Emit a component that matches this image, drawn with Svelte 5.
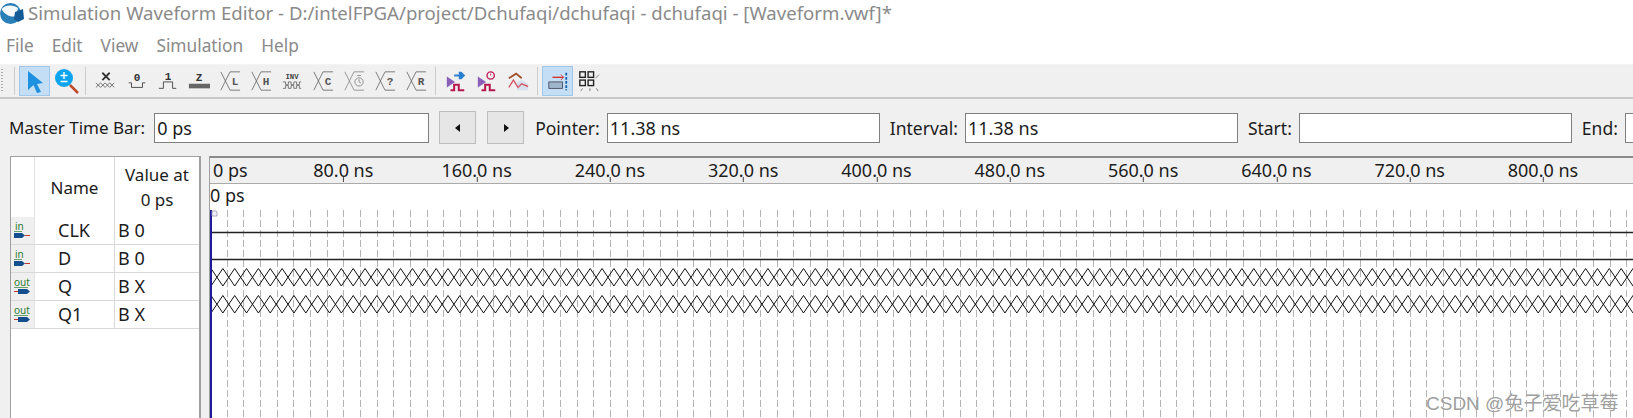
<script lang="ts">
    const menus = ['File', 'Edit', 'View', 'Simulation', 'Help'];
    const ticks = ['80.0 ns', '160.0 ns', '240.0 ns', '320.0 ns', '400.0 ns', '480.0 ns', '560.0 ns', '640.0 ns', '720.0 ns', '800.0 ns'];
    const signals = [
        { name: 'CLK', value: 'B 0', dir: 'in' },
        { name: 'D', value: 'B 0', dir: 'in' },
        { name: 'Q', value: 'B X', dir: 'out' },
        { name: 'Q1', value: 'B X', dir: 'out' }
    ];
    const gridStep = 133.3 / 8;
    const gridLines = Array.from({ length: 86 }, (_, i) => (i + 1) * gridStep);

    // unknown value band: a row of crossed diagonals
    function crossBand(y: number, h: number) {
        let d = '';
        for (let x = 1; x < 1430; x += 11.85) {
            d += `M${x} ${y}L${x + 11.85} ${y + h}M${x + 11.85} ${y}L${x} ${y + h}`;
        }
        return d;
    }
</script>

<div class="window">
    <div class="titlebar">
        <svg class="logo" viewBox="0 0 24 24" aria-hidden="true">
            <circle cx="10.500" cy="12.500" r="10.500" fill="#2a7fb8" />
            <path d="M1.500 8 C6 3 14 4 18 7 L16 15 C11 17 5 14 1.500 8 Z" fill="#f6f9fc" />
            <path d="M15 11 L23 8 L24 18 L18 21 L14 18 Z" fill="#135a96" />
        </svg>
        <span>Simulation Waveform Editor - D:/intelFPGA/project/Dchufaqi/dchufaqi - dchufaqi - [Waveform.vwf]*</span>
    </div>

    <nav class="menubar">
        {#each menus as m}
            <span>{m}</span>
        {/each}
    </nav>

    <div class="toolbar">
        <div class="grip"></div>
        <div class="sep"></div>
        <button class="tool on" aria-label="Select">
            <svg viewBox="0 0 24 24" width="24" height="24"><path d="M5 2 L20 14 L14 15 L18 23 L14 24 L10.500 16 L5 21 Z" fill="#1e90e0" /></svg>
        </button>
        <button class="tool" aria-label="Zoom">
            <svg viewBox="0 0 26 28" width="26" height="28">
                <path d="M17 18 L25 26" stroke="#c0492b" stroke-width="2.500" />
                <circle cx="11" cy="11" r="9" fill="#0ca4ec" />
                <path d="M7.500 8.500h7M11 5v7M7.500 14.500h7" stroke="#fff" stroke-width="1.400" />
            </svg>
        </button>
        <div class="sep"></div>

        <button class="tool" aria-label="Unknown">
            <svg viewBox="0 0 24 24" width="22" height="22" fill="none" stroke="#333">
                <path d="M8 3l8 8M16 3l-8 8" stroke-width="2" />
                <path d="M1 14l5 5 5-5 5 5 5-5M1 19l5-5 5 5 5-5 5 5" stroke-width=".7" />
            </svg>
        </button>
        <button class="tool" aria-label="Low">
            <svg viewBox="0 0 24 24" width="22" height="22" fill="none" stroke="#444">
                <path d="M3 14h3v5h12v-5h3" />
                <text x="12" y="12" class="glyph" text-anchor="middle">0</text>
            </svg>
        </button>
        <button class="tool" aria-label="High">
            <svg viewBox="0 0 24 24" width="22" height="22" fill="none" stroke="#444">
                <path d="M2 20h5v-7h10v7h4" />
                <text x="12" y="11" class="glyph" text-anchor="middle">1</text>
            </svg>
        </button>
        <button class="tool" aria-label="High impedance">
            <svg viewBox="0 0 24 24" width="22" height="22">
                <rect x="1" y="15" width="23" height="5" fill="#666" />
                <text x="12" y="12" class="glyph" text-anchor="middle">Z</text>
            </svg>
        </button>
        {#each ['L', 'H'] as l}
            <button class="tool" aria-label={l}>
                <svg viewBox="0 0 24 24" width="22" height="22" fill="none" stroke="#666">
                    <path d="M2 2l5 10-5 10M12 2l-5 10 5 10M12 2h11M12 22h11" stroke-width=".9" />
                    <text x="17.500" y="16" class="mono" text-anchor="middle">{l}</text>
                </svg>
            </button>
        {/each}
        <button class="tool" aria-label="Invert">
            <svg viewBox="0 0 24 24" width="22" height="22" fill="none" stroke="#555">
                <text x="12" y="10" class="tiny" text-anchor="middle">INV</text>
                <path d="M2 13h3v3h3v-3h3v3h3v-3h3v3h3v-3h2M2 20h3v-3h3v3h3v-3h3v3h3v-3h3v3h2" stroke-width=".8" />
            </svg>
        </button>
        <button class="tool" aria-label="Count">
            <svg viewBox="0 0 24 24" width="22" height="22" fill="none" stroke="#666">
                <path d="M2 2l5 10-5 10M12 2l-5 10 5 10M12 2h11M12 22h11" stroke-width=".9" />
                <text x="17.500" y="16" class="mono" text-anchor="middle">C</text>
            </svg>
        </button>
        <button class="tool" aria-label="Clock">
            <svg viewBox="0 0 24 24" width="22" height="22" fill="none" stroke="#888">
                <path d="M2 2l5 10-5 10M12 2l-5 10 5 10M12 2h11M12 22h11" stroke-width=".9" />
                <circle cx="17.500" cy="13" r="4.500" />
                <path d="M17.500 10v3l2 1M15.500 6h4" />
            </svg>
        </button>
        <button class="tool" aria-label="Arbitrary">
            <svg viewBox="0 0 24 24" width="22" height="22" fill="none" stroke="#666">
                <path d="M2 2l5 10-5 10M12 2l-5 10 5 10M12 2h11M12 22h11" stroke-width=".9" />
                <text x="17.500" y="16" class="mono" text-anchor="middle">?</text>
            </svg>
        </button>
        <button class="tool" aria-label="Random">
            <svg viewBox="0 0 24 24" width="22" height="22" fill="none" stroke="#666">
                <path d="M2 2l5 10-5 10M12 2l-5 10 5 10M12 2h11M12 22h11" stroke-width=".9" />
                <text x="17.500" y="16" class="mono" text-anchor="middle">R</text>
            </svg>
        </button>
        <div class="sep"></div>

        <button class="tool" aria-label="Functional simulation">
            <svg viewBox="0 0 24 24" width="22" height="22" fill="none">
                <path d="M2 7l9 6-9 6z" fill="#8a5fb8" />
                <path d="M10 5h5v-3l3 0 4 4-4 4h-3v-3h-5z" fill="#2b7fd0" />
                <path d="M6 22h4v-6h5v6h6" stroke="#b5174f" stroke-width="2.200" />
            </svg>
        </button>
        <button class="tool" aria-label="Timing simulation">
            <svg viewBox="0 0 24 24" width="22" height="22" fill="none">
                <path d="M2 7l9 6-9 6z" fill="#8a5fb8" />
                <circle cx="16" cy="6" r="4" stroke="#c2185b" stroke-width="1.500" />
                <path d="M16 4v2" stroke="#c2185b" />
                <path d="M6 22h4v-6h5v6h6" stroke="#b5174f" stroke-width="2.200" />
            </svg>
        </button>
        <button class="tool" aria-label="Netlist">
            <svg viewBox="0 0 24 24" width="22" height="22" fill="none">
                <path d="M11 13l5-2 7 4v7H11z" fill="#d5e2ee" />
                <path d="M2 9l8-5 6 5" stroke="#a0522d" stroke-width="2" />
                <path d="M2 19l5-8 5 8 4-4 7 3" stroke="#d65a6a" stroke-width="1.500" />
            </svg>
        </button>
        <div class="sep"></div>

        <button class="tool on" aria-label="Snap">
            <svg viewBox="0 0 24 24" width="22" height="22" fill="none">
                <path d="M6 8h12" stroke="#d0342c" stroke-width="1.500" />
                <path d="M15 5l3 3-3 3" stroke="#d0342c" />
                <rect x="2" y="13" width="15" height="7" fill="#9fb6cc" stroke="#334" stroke-width=".8" />
                <path d="M21 3v19" stroke="#1c5fae" stroke-width="2" stroke-dasharray="3 1.500" />
            </svg>
        </button>
        <button class="tool" aria-label="Grid">
            <svg viewBox="0 0 24 24" width="22" height="22" fill="none" stroke="#222" stroke-width="1.500">
                <rect x="2" y="2" width="6" height="6" />
                <rect x="11" y="2" width="6" height="6" />
                <rect x="2" y="11" width="6" height="6" />
                <rect x="11" y="11" width="6" height="6" />
                <path d="M19 9l4-4M3 23l2-3M13 23v-3M22 23l-2-3" stroke-width="1" stroke="#777" />
            </svg>
        </button>
    </div>

    <div class="timebar">
        <label class="m">Master Time Bar:<span class="field f1">0 ps</span></label>
        <button class="step" aria-label="Previous"><i class="tri left"></i></button>
        <button class="step" aria-label="Next"><i class="tri right"></i></button>
        <label class="p">Pointer:<span class="field f2">11.38 ns</span></label>
        <label class="p">Interval:<span class="field f2">11.38 ns</span></label>
        <label class="p">Start:<span class="field f2"></span></label>
        <label class="p">End:<span class="field f3"></span></label>
    </div>

    <div class="editor">
        <div class="table">
            <div class="row head">
                <div class="c0"></div>
                <div class="c1">Name</div>
                <div class="c2">Value at<br />0 ps</div>
            </div>
            {#each signals as s}
                <div class="row sig">
                    <div class="c0 dir">
                        <svg viewBox="0 0 20 20" width="20" height="20" overflow="visible" aria-hidden="true">
                            <text x={s.dir === 'in' ? 2 : 1} y="8" class="dirtext">{s.dir}</text>
                            {#if s.dir === 'in'}
                                <path d="M1 9.500h8" stroke="#2e7d32" stroke-width=".7" />
                                <path d="M1 11h8l3 2.500-3 2.500H1z" fill="#134f8f" />
                                <path d="M12 13.500h5" stroke="#c0392b" />
                            {:else}
                                <path d="M1 9.500h14" stroke="#2e7d32" stroke-width=".7" />
                                <path d="M5 11h9l3 2.500-3 2.500H5z" fill="#134f8f" />
                                <path d="M1 13.500h4" stroke="#c0392b" />
                            {/if}
                        </svg>
                    </div>
                    <div class="c1 nm">{s.name}</div>
                    <div class="c2 val">{s.value}</div>
                </div>
            {/each}
        </div>

        <div class="wave">
            <div class="ruler">
                <span class="zero">0 ps</span>
                {#each ticks as t, i}
                    <span class="tick" style="left: {(i + 1) * 133.3}px">{t}</span>
                {/each}
            </div>
            <div class="cursor">0 ps</div>
            <div class="plot">
                <svg class="canvas" width="1424" height="208" aria-hidden="true">
                    {#each gridLines as g}
                        <path d="M{Math.round(g) + .5} 0V208" stroke="#b4b4b4" stroke-dasharray="7 3" />
                    {/each}
                    <path d="M1 22.500H1424M1 49.500H1424" stroke="#222" stroke-width="1.500" />
                    <path d={crossBand(58.500, 17.500)} class="band" />
                    <path d={crossBand(85.500, 17.500)} class="band" />
                    <path d="M1 0V208" stroke="#1c1c9c" stroke-width="2" />
                    <path d="M2 1h4l1 1v4h-5z" fill="#eef" stroke="#99a" stroke-width=".8" />
                </svg>
            </div>
        </div>
    </div>

    <div class="mark">CSDN @兔子爱吃草莓</div>
</div>

<style>
    :global(body) {
        margin: 0;
        background: #f0f0f0;
    }

    .window {
        position: relative;
        width: 1633px;
        height: 418px;
        overflow: hidden;
        display: flex;
        flex-direction: column;
        font-family: "Noto Sans", "Open Sans", sans-serif;
        color: #1c1c1c;
        font-size: 17.5px;
    }

    .titlebar {
        height: 30px;
        box-sizing: border-box;
        padding-bottom: 5px;
        flex: none;
        background: #fff;
        display: flex;
        align-items: center;
        gap: 4px;
        font-size: 18.6px;
        color: #8a8a8a;
        white-space: nowrap;
    }

    .logo { width: 24px; height: 24px; flex: none; }

    .menubar {
        height: 34px;
        box-sizing: border-box;
        padding: 0 0 4px 6px;
        flex: none;
        background: #fff;
        display: flex;
        align-items: center;
        gap: 18px;
        font-size: 17.3px;
        color: #8a8a8a;
    }

    .toolbar {
        height: 35px;
        box-sizing: border-box;
        flex: none;
        border-top: 1px solid #f4f4f4;
        border-bottom: 2px solid #c8c8c8;
        background: #f0f0f0;
        display: flex;
        align-items: center;
        padding-left: 1px;
    }

    .grip {
        width: 2px;
        height: 24px;
        margin-right: 7px;
        background: repeating-linear-gradient(#b0b0b0 0 1px, transparent 1px 3px);
    }

    .sep {
        width: 1px;
        height: 28px;
        background: #ccc;
        margin: 0 4px;
        flex: none;
    }

    .tool {
        width: 31px;
        height: 30px;
        flex: none;
        padding: 0;
        border: 1px solid transparent;
        background: none;
        display: flex;
        align-items: center;
        justify-content: center;
    }

    .tool.on {
        background: #c4dff5;
        border-color: #9fc8ea;
    }

    .glyph { font: bold 12px "Liberation Mono", monospace; fill: #333; stroke: none; }
    .mono { font: bold 12px "Liberation Mono", monospace; fill: #555; stroke: none; }
    .tiny { font: bold 8px "Liberation Mono", monospace; fill: #444; stroke: none; }

    .timebar {
        height: 57px;
        box-sizing: border-box;
        flex: none;
        display: flex;
        align-items: center;
        padding-left: 9px;
        white-space: nowrap;
    }

    label {
        display: flex;
        align-items: center;
        gap: 7px;
    }

    .field {
        height: 30px;
        box-sizing: border-box;
        border: 1px solid #7f7f7f;
        background: #fff;
        display: flex;
        align-items: center;
        padding-left: 2px;
        font-size: 18px;
    }

    .m { margin-right: 10px; font-size: 17px; gap: 9px; }
    .f1 { width: 275px; }
    .f2 { width: 273px; margin-right: 10px; }
    .f3 { width: 100px; }

    .step {
        width: 37px;
        height: 33px;
        margin-right: 11px;
        flex: none;
        padding: 0;
        border: 1px solid #bdbdbd;
        background: #e6e6e6;
        display: flex;
        align-items: center;
        justify-content: center;
    }

    .tri { width: 0; height: 0; border: 4px solid transparent; }
    .tri.left { border-right: 5px solid #111; margin-left: -5px; }
    .tri.right { border-left: 5px solid #111; margin-right: -5px; }

    .editor {
        flex: 1;
        min-height: 0;
        display: flex;
        padding-left: 10px;
    }

    .table {
        width: 191px;
        flex: none;
        box-sizing: border-box;
        background: #fff;
        border: 1px solid #a0a0a0;
        border-right-width: 2px;
        border-bottom: 0;
    }

    .row { display: flex; box-sizing: border-box; }
    .head { height: 60px; font-size: 17px; }
    .sig { height: 28px; border-bottom: 1px solid #d8d8d8; }

    .c0 { width: 24px; flex: none; border-right: 1px solid #e2e2e2; box-sizing: border-box; }
    .dir { background: #efefef; padding: 5px 0 0 2px; }
    .dirtext { font: 10px "Noto Sans", sans-serif; fill: #2e7d32; }
    .c1 { width: 80px; flex: none; border-right: 1px solid #d8d8d8; box-sizing: border-box; }
    .c2 { flex: 1; }
    .head .c1 { display: flex; align-items: center; justify-content: center; }
    .head .c2 { text-align: center; line-height: 25px; padding-top: 5px; }
    .nm { padding-left: 23px; line-height: 27px; font-size: 18px; }
    .val { padding-left: 3px; line-height: 27px; font-size: 18px; }

    .wave {
        flex: 1;
        min-width: 0;
        margin-left: 8px;
        background: #fff;
        display: flex;
        flex-direction: column;
        border-top: 2px solid #8a8a8a;
        border-left: 1px solid #a0a0a0;
    }

    .ruler {
        height: 26px;
        box-sizing: border-box;
        flex: none;
        position: relative;
        background: #f0f0f0;
        border-bottom: 1px solid #aaa;
        line-height: 24px;
        font-size: 18px;
    }

    .zero { position: absolute; left: 3px; top: 0; }
    .tick {
        position: absolute;
        top: 0;
        transform: translateX(-50%);
        white-space: nowrap;
    }

    .tick::after {
        content: "";
        position: absolute;
        left: 50%;
        bottom: 0;
        top: 19px;
        width: 1px;
        background: #444;
    }

    .cursor {
        height: 26px;
        box-sizing: border-box;
        flex: none;
        line-height: 23px;
        font-size: 18px;
    }

    .plot { flex: 1; min-height: 0; }
    .canvas { display: block; }

    .band { fill: none; stroke: #111; stroke-width: 1; }

    .mark {
        position: absolute;
        left: 1426px;
        top: 388px;
        font: 19px "Liberation Sans", "Noto Sans CJK SC", sans-serif;
        color: #a0a0a0;
    }
</style>
